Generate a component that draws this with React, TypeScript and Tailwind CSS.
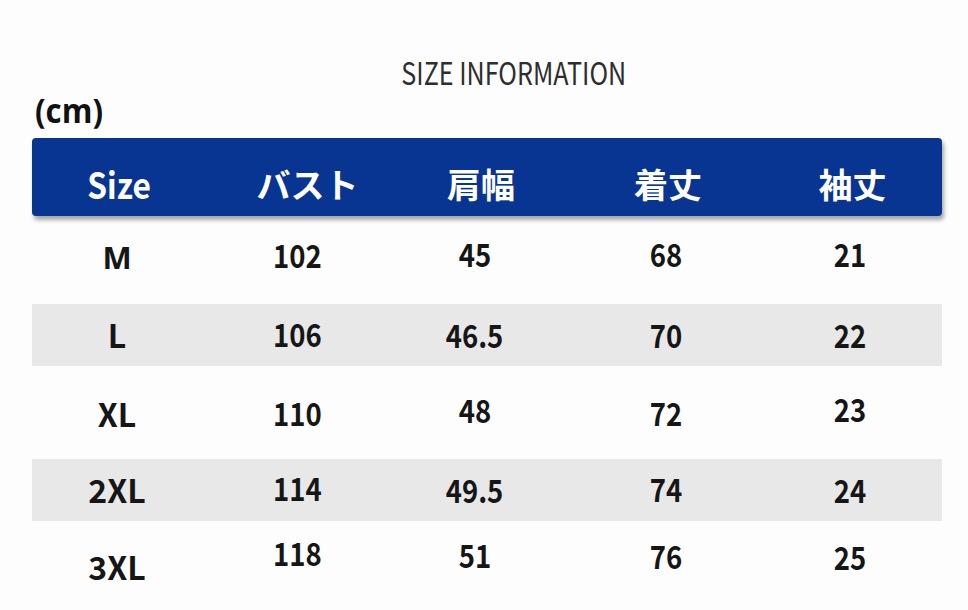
const headers = ['Size', 'バスト', '肩幅', '着丈', '袖丈']

// row data; h = row height, gray = shaded band, dy = per-cell nudge to match the uneven source
const rows = [
  { cells: ['M', '102', '45', '68', '21'], h: 'h-[88px]', gray: false, dy: ['-translate-y-[3px]', '-translate-y-[6px]', '-translate-y-[7px]', '-translate-y-[7px]', '-translate-y-[7px]'] },
  { cells: ['L', '106', '46.5', '70', '22'], h: 'h-[62px]', gray: true, dy: ['-translate-y-[1px]', '-translate-y-[2px]', '-translate-y-[1px]', '-translate-y-[1px]', '-translate-y-[1px]'] },
  { cells: ['XL', '110', '48', '72', '23'], h: 'h-[93px]', gray: false, dy: ['', '-translate-y-[1px]', '-translate-y-[4px]', '-translate-y-[1px]', '-translate-y-[5px]'] },
  { cells: ['2XL', '114', '49.5', '74', '24'], h: 'h-[62px]', gray: true, dy: ['-translate-y-[1px]', '-translate-y-[3px]', '-translate-y-[1px]', '-translate-y-[2px]', '-translate-y-[1px]'] },
  { cells: ['3XL', '118', '51', '76', '25'], h: 'h-[80px]', gray: false, dy: ['translate-y-[5px]', '-translate-y-[9px]', '-translate-y-[7px]', '-translate-y-[6px]', '-translate-y-[5px]'] },
]

const headCols = 'grid grid-cols-[174px_203px_144px_230px_139px]'
const bodyCols = 'grid grid-cols-[170px_191px_163px_220px_148px]'

export default function App() {
  return (
    <div className="w-[968px] h-[610px] bg-[#fdfdfd] overflow-hidden font-['Noto_Sans_CJK_JP',sans-serif]">
      <div className="h-[98px] pt-[56px] flex justify-center">
        <span className="inline-block ml-[60px] scale-x-[0.81] text-[31px] leading-none text-[#2e2e2e] whitespace-nowrap">
          SIZE INFORMATION
        </span>
      </div>

      <div className="px-[35px] h-[40px]">
        <span className="inline-block origin-left scale-x-[0.92] -translate-y-[5px] font-['Open_Sans',sans-serif] font-bold text-[34px] leading-none text-[#111]">
          (cm)
        </span>
      </div>

      <div className="mx-[32px] w-[910px]">
        <div className={`${headCols} h-[78px] rounded-[4px] bg-[#083592] shadow-[2px_4px_4px_rgba(0,0,0,0.35)] items-end pb-[15px]`}>
          {headers.map((h, i) => (
            <div key={h} className="flex justify-center">
              <span className={`inline-block text-white font-bold leading-none ${i === 0 ? 'text-[36px] scale-x-[0.88]' : 'text-[34px]'}`}>
                {h}
              </span>
            </div>
          ))}
        </div>

        {rows.map((r, ri) => (
          <div key={ri} className={`${bodyCols} ${r.h} items-center ${r.gray ? 'bg-[#e8e8e8]' : ''}`}>
            {r.cells.map((c, ci) => (
              <div key={ci} className={`flex justify-center ${r.dy[ci]}`}>
                <span
                  className={`inline-block leading-none text-[#161616] font-bold ${
                    ci === 0 && ri === 0
                      ? "font-['Open_Sans',sans-serif] text-[31px]"
                      : ci === 0
                        ? 'text-[32px]'
                        : 'text-[32px] scale-x-[0.86]'
                  }`}
                >
                  {c}
                </span>
              </div>
            ))}
          </div>
        ))}
      </div>
    </div>
  )
}
